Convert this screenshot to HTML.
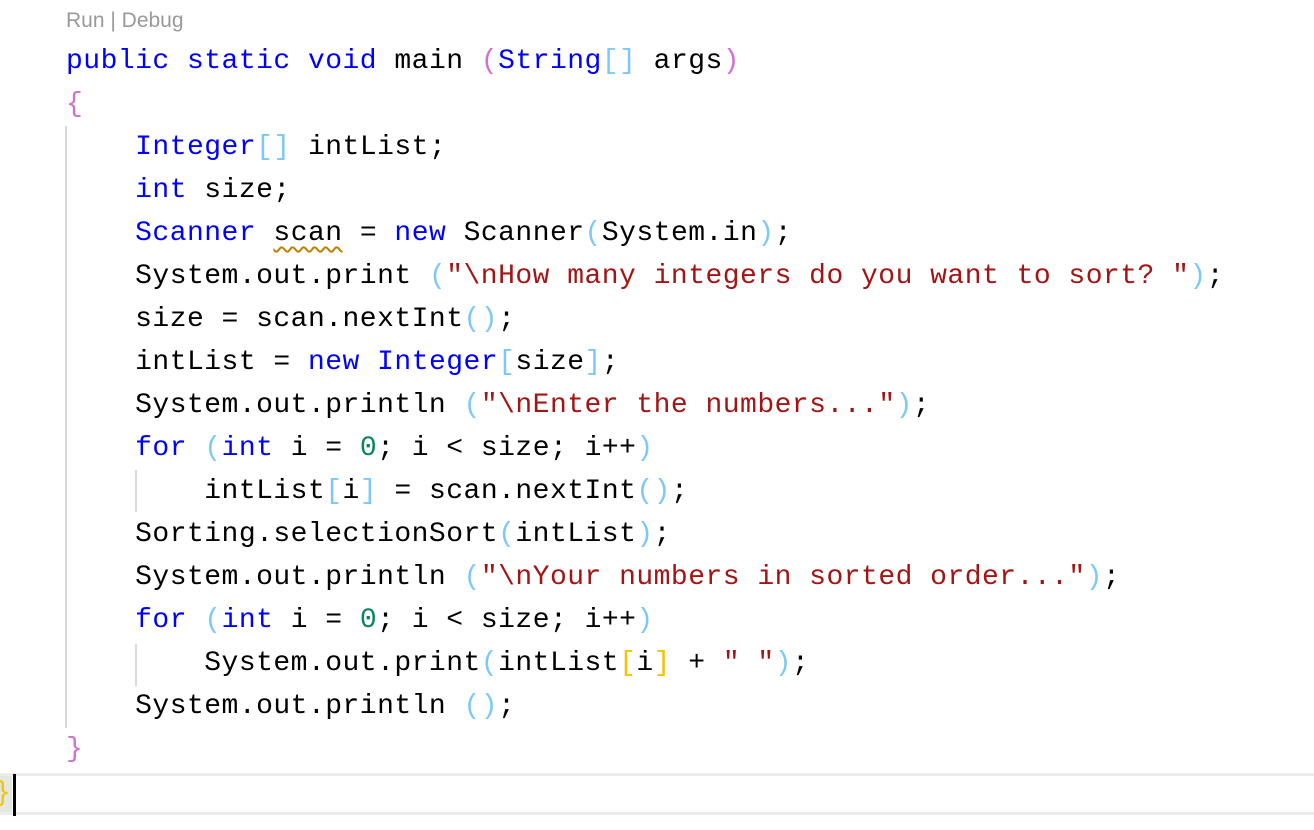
<!DOCTYPE html>
<html><head><style>
html,body{margin:0;padding:0;background:#fff;width:1314px;height:830px;overflow:hidden;position:relative}
.l{position:absolute;left:66px;height:43px;line-height:43px;font-family:"Liberation Mono",monospace;font-size:28px;letter-spacing:0.48px;white-space:pre;color:#000}
.k{color:#0000ff}.s{color:#a31515}.n{color:#098658}.b{color:#7cc8f8}.p{color:#d46fd0}.y{color:#f5c400}
.lens{position:absolute;left:66px;top:9px;font-family:"Liberation Sans",sans-serif;font-size:21px;color:#999}
.g{position:absolute;width:2px;background:#d8d8d8}
.sq{text-decoration:underline wavy #c08000;text-decoration-thickness:1.5px;text-underline-offset:6px}
</style></head><body>
<div class="lens">Run | Debug</div>
<div class="g" style="left:65px;top:126px;height:602px"></div>
<div class="g" style="left:135px;top:470px;height:42px"></div>
<div class="g" style="left:135px;top:644px;height:42px"></div>
<div style="position:absolute;left:0;top:773px;width:1314px;height:3px;background:#ececec"></div>
<div style="position:absolute;left:0;top:812px;width:1314px;height:3px;background:#ececec"></div>
<div style="position:absolute;left:0;top:776px;width:12px;height:36px;background:#e2e8e0"></div>
<div style="position:absolute;left:13px;top:774px;width:3px;height:42px;background:#000"></div>
<div class="l" style="top:40px"><span class="k">public static void</span> main <span class="p">(</span><span class="k">String</span><span class="b">[]</span> args<span class="p">)</span></div>
<div class="l" style="top:83px"><span class="p">{</span></div>
<div class="l" style="top:126px">    <span class="k">Integer</span><span class="b">[]</span> intList;</div>
<div class="l" style="top:169px">    <span class="k">int</span> size;</div>
<div class="l" style="top:212px">    <span class="k">Scanner</span> <span class="sq">scan</span> = <span class="k">new</span> Scanner<span class="b">(</span>System.in<span class="b">)</span>;</div>
<div class="l" style="top:255px">    System.out.print <span class="b">(</span><span class="s">"\nHow many integers do you want to sort? "</span><span class="b">)</span>;</div>
<div class="l" style="top:298px">    size = scan.nextInt<span class="b">()</span>;</div>
<div class="l" style="top:341px">    intList = <span class="k">new</span> <span class="k">Integer</span><span class="b">[</span>size<span class="b">]</span>;</div>
<div class="l" style="top:384px">    System.out.println <span class="b">(</span><span class="s">"\nEnter the numbers..."</span><span class="b">)</span>;</div>
<div class="l" style="top:427px">    <span class="k">for</span> <span class="b">(</span><span class="k">int</span> i = <span class="n">0</span>; i &lt; size; i++<span class="b">)</span></div>
<div class="l" style="top:470px">        intList<span class="b">[</span>i<span class="b">]</span> = scan.nextInt<span class="b">()</span>;</div>
<div class="l" style="top:513px">    Sorting.selectionSort<span class="b">(</span>intList<span class="b">)</span>;</div>
<div class="l" style="top:556px">    System.out.println <span class="b">(</span><span class="s">"\nYour numbers in sorted order..."</span><span class="b">)</span>;</div>
<div class="l" style="top:599px">    <span class="k">for</span> <span class="b">(</span><span class="k">int</span> i = <span class="n">0</span>; i &lt; size; i++<span class="b">)</span></div>
<div class="l" style="top:642px">        System.out.print<span class="b">(</span>intList<span class="y">[</span>i<span class="y">]</span> + <span class="s">" "</span><span class="b">)</span>;</div>
<div class="l" style="top:685px">    System.out.println <span class="b">()</span>;</div>
<div class="l" style="top:728px"><span class="p">}</span></div>
<div class="l" style="top:772px;left:-6px"><span class="y">}</span></div>
</body></html>
